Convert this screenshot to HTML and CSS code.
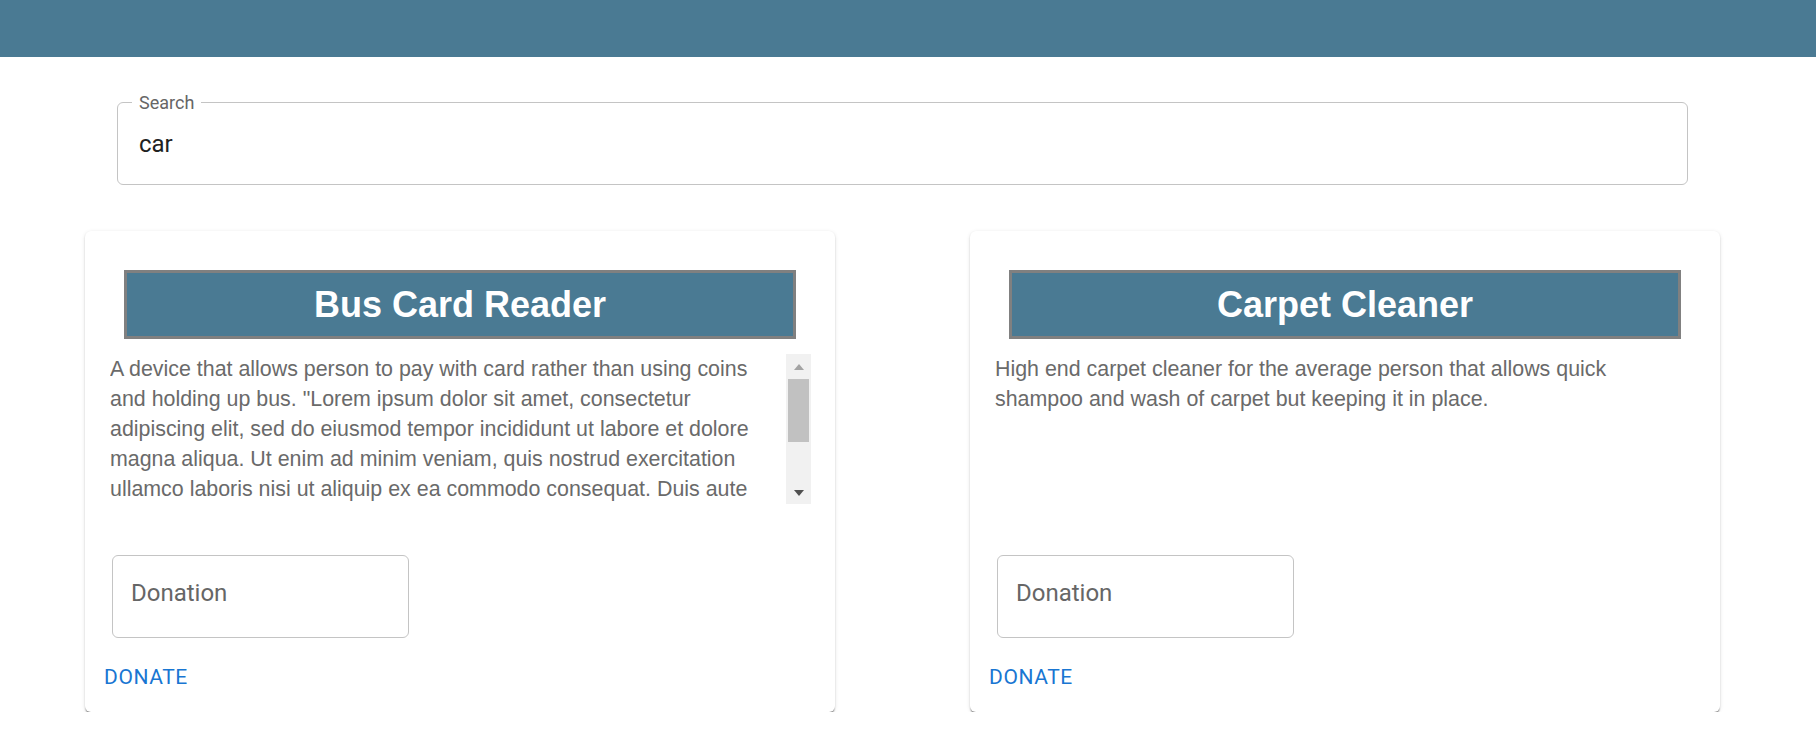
FILE: index.html
```html
<!DOCTYPE html>
<html lang="en">
<head>
<meta charset="utf-8">
<title>Projects</title>
<link rel="stylesheet" href="styles.css">
</head>
<body>
<header class="appbar"></header>
<main class="page">
  <section class="search-wrap">
    <div class="field">
      <label class="field-label" for="search">Search</label>
      <input id="search" class="field-input" type="text" value="car">
    </div>
  </section>
  <section class="cards">
    <article class="card">
      <h2 class="card-title">Bus Card Reader</h2>
      <div class="desc-row">
        <div class="card-desc">
          <p>A device that allows person to pay with card rather than using coins and holding up bus. "Lorem ipsum dolor sit amet, consectetur adipiscing elit, sed do eiusmod tempor incididunt ut labore et dolore magna aliqua. Ut enim ad minim veniam, quis nostrud exercitation ullamco laboris nisi ut aliquip ex ea commodo consequat. Duis aute irure dolor in reprehenderit in voluptate velit esse cillum dolore eu fugiat nulla pariatur. Excepteur sint occaecat cupidatat non proident, sunt in culpa qui officia deserunt mollit anim id est laborum."</p>
        </div>
        <div class="scrollbar" aria-hidden="true">
          <span class="sb-btn sb-up"></span>
          <span class="sb-track"><span class="sb-thumb"></span></span>
          <span class="sb-btn sb-down"></span>
        </div>
      </div>
      <input class="donation" type="text" placeholder="Donation">
      <button class="donate-btn" type="button">Donate</button>
    </article>
    <article class="card">
      <h2 class="card-title">Carpet Cleaner</h2>
      <div class="desc-row">
        <div class="card-desc">
          <p>High end carpet cleaner for the average person that allows quick shampoo and wash of carpet but keeping it in place.</p>
        </div>
      </div>
      <input class="donation" type="text" placeholder="Donation">
      <button class="donate-btn" type="button">Donate</button>
    </article>
  </section>
</main>
</body>
</html>
```

FILE: styles.css
```css
html, body {
  margin: 0;
  padding: 0;
  background: #ffffff;
}

body {
  font-family: "Liberation Sans", Arial, sans-serif;
  overflow: hidden;
}

.appbar {
  height: 57px;
  background: #4a7a93;
}

.page {
  width: 1805px;
}

.search-wrap {
  padding: 45px 117px 0 117px;
}

.field {
  position: relative;
  height: 83px;
  box-sizing: border-box;
  border: 1px solid #c4c4c4;
  border-radius: 6px;
}

.field-label {
  position: absolute;
  left: 14px;
  top: -10px;
  padding: 0 7px;
  background: #ffffff;
  font-family: Roboto, "Liberation Sans", sans-serif;
  font-size: 18px;
  line-height: 20px;
  color: #666666;
}

.field-input {
  display: block;
  width: 100%;
  height: 81px;
  box-sizing: border-box;
  border: none;
  outline: none;
  background: transparent;
  padding: 0 21px;
  margin: 0;
  font-family: Roboto, "Liberation Sans", sans-serif;
  font-size: 24px;
  color: #212121;
}

.cards {
  display: flex;
  gap: 135px;
  padding-left: 85px;
  margin-top: 46px;
}

.card {
  width: 750px;
  height: 481px;
  box-sizing: border-box;
  padding: 39px 24px 0 25px;
  background: #ffffff;
  border-radius: 6px;
  box-shadow: 0 3px 1.5px -1px rgba(0, 0, 0, 0.3),
              0 1.5px 1.5px 0 rgba(0, 0, 0, 0.16),
              0 1px 4px 0 rgba(0, 0, 0, 0.1);
  display: flex;
  flex-direction: column;
  align-items: flex-start;
}

.card-title {
  align-self: stretch;
  margin: 0 15px 0 14px;
  height: 69px;
  box-sizing: border-box;
  border: 3px solid #808080;
  background: #4a7a93;
  color: #ffffff;
  font-family: "Liberation Sans", Arial, sans-serif;
  font-weight: 700;
  font-size: 36px;
  display: flex;
  align-items: center;
  justify-content: center;
}

.desc-row {
  align-self: stretch;
  margin-top: 15px;
  height: 150px;
  display: flex;
}

.card-desc {
  flex: 1;
  min-width: 0;
  overflow-y: auto;
  scrollbar-width: none;
  font-size: 21.4px;
  line-height: 30px;
  color: #6a6a6a;
}

.card-desc p {
  margin: 0;
  max-width: 657px;
}

.scrollbar {
  width: 25px;
  flex: none;
  background: #f1f1f1;
  display: flex;
  flex-direction: column;
}

.sb-btn {
  height: 25px;
  display: flex;
  align-items: center;
  justify-content: center;
}

.sb-up::before {
  content: "";
  width: 0;
  height: 0;
  border-left: 5.5px solid transparent;
  border-right: 5.5px solid transparent;
  border-bottom: 6px solid #a3a3a3;
}

.sb-down::before {
  content: "";
  width: 0;
  height: 0;
  margin-top: 2px;
  border-left: 5.5px solid transparent;
  border-right: 5.5px solid transparent;
  border-top: 6px solid #505050;
}

.sb-track {
  flex: 1;
  padding: 0 2px;
}

.sb-thumb {
  display: block;
  height: 63px;
  background: #c1c1c1;
}

.donation {
  margin: 51px 0 0 2px;
  width: 297px;
  height: 83px;
  box-sizing: border-box;
  border: 1px solid #c4c4c4;
  border-radius: 6px;
  padding: 0 18px 7px 18px;
  outline: none;
  font-family: Roboto, "Liberation Sans", sans-serif;
  font-size: 24px;
  color: #212121;
  background: #ffffff;
}

.donation::placeholder {
  color: #666666;
  opacity: 1;
}

.donate-btn {
  margin: 27px 0 0 -6px;
  padding: 0;
  border: none;
  background: none;
  font-family: Roboto, "Liberation Sans", sans-serif;
  font-size: 21px;
  line-height: 24px;
  letter-spacing: 0.6px;
  text-transform: uppercase;
  color: #1976d2;
  cursor: pointer;
}
```
